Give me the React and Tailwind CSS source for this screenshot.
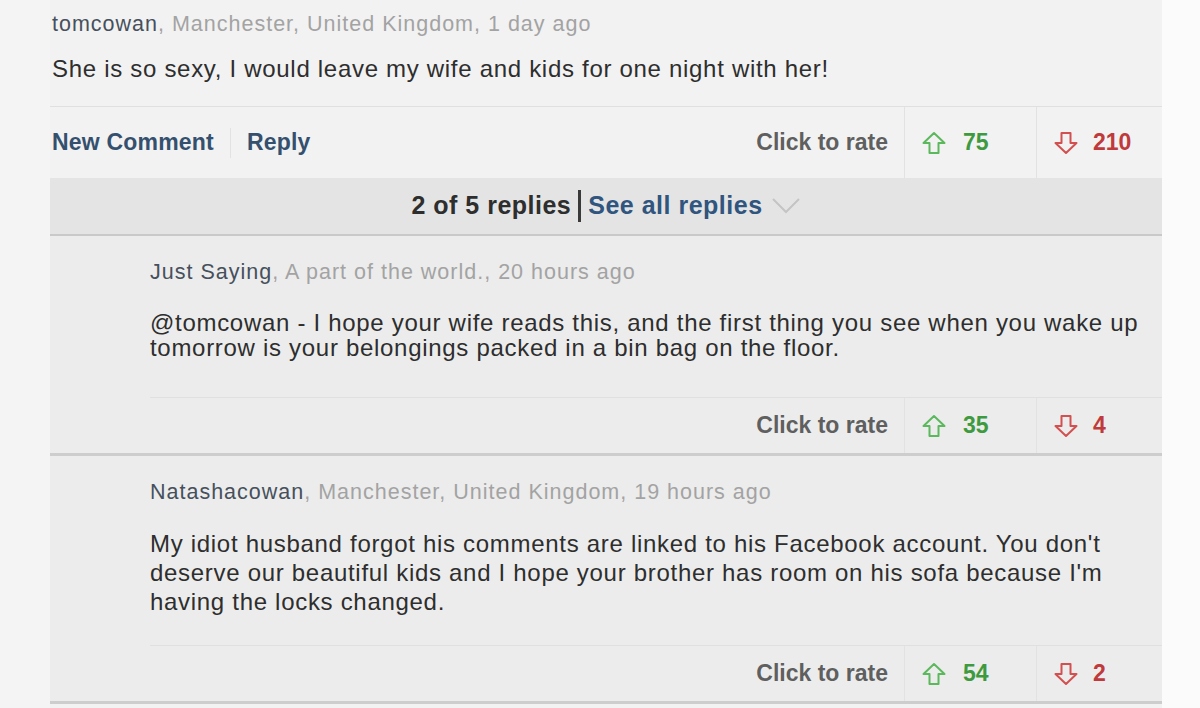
import React from 'react';

const font = { fontFamily: '"Liberation Sans", Arial, sans-serif' };

const UpArrow = () => (
  <svg width="26" height="24" viewBox="0 0 26 24" fill="none">
    <path d="M13 2 L23.5 12 L17.5 12 L17.5 22 L8.5 22 L8.5 12 L2.5 12 Z" stroke="#5cb85c" strokeWidth="2" strokeLinejoin="round" />
  </svg>
);

const DownArrow = () => (
  <svg width="26" height="24" viewBox="0 0 26 24" fill="none">
    <path d="M13 22 L23.5 12 L17.5 12 L17.5 2 L8.5 2 L8.5 12 L2.5 12 Z" stroke="#d2504f" strokeWidth="2" strokeLinejoin="round" />
  </svg>
);

const Rating = ({ up, down }) => (
  <div className="flex items-stretch justify-end h-full">
    <div className="flex items-center pr-[16px] text-[23px] font-bold text-[#5f5f5f]">Click to rate</div>
    <div className="flex items-center w-[132px] border-l border-[#e2e2e2] pl-[16px] gap-[16px]">
      <UpArrow />
      <span className="text-[23px] font-bold text-[#3e9a3e]">{up}</span>
    </div>
    <div className="flex items-center w-[126px] border-l border-[#e2e2e2] pl-[16px] gap-[14px]">
      <DownArrow />
      <span className="text-[23px] font-bold text-[#c0393b]">{down}</span>
    </div>
  </div>
);

const Meta = ({ name, rest }) => (
  <div className="text-[21.5px] tracking-[1px] leading-[26px]">
    <span className="text-[#46505c]">{name}</span>
    <span className="text-[#a3a3a3]">, {rest}</span>
  </div>
);

const replies = [
  {
    name: 'Just Saying',
    rest: 'A part of the world., 20 hours ago',
    lines: [
      '@tomcowan - I hope your wife reads this, and the first thing you see when you wake up',
      'tomorrow is your belongings packed in a bin bag on the floor.',
    ],
    up: 35,
    down: 4,
    h: 'h-[220px]',
    text: 'mt-[25px] leading-[25px]',
  },
  {
    name: 'Natashacowan',
    rest: 'Manchester, United Kingdom, 19 hours ago',
    lines: [
      "My idiot husband forgot his comments are linked to his Facebook account. You don't",
      "deserve our beautiful kids and I hope your brother has room on his sofa because I'm",
      'having the locks changed.',
    ],
    up: 54,
    down: 2,
    h: 'h-[248px]',
    text: 'mt-[24px] leading-[29px]',
  },
];

export default function App() {
  return (
    <div className="w-[1200px] h-[708px] overflow-hidden bg-[#f6f6f6] flex" style={font}>
      <div className="w-[50px] bg-[#f4f4f4]" />
      <div className="w-[1112px] flex flex-col bg-[#f2f2f2]">
        {/* main comment */}
        <div className="h-[107px] border-b border-[#e0e0e0] pl-[2px] pt-[11px]">
          <Meta name="tomcowan" rest="Manchester, United Kingdom, 1 day ago" />
          <p className="mt-[18px] text-[24px] leading-[28px] text-[#2e2e2e] tracking-[0.7px]">
            She is so sexy, I would leave my wife and kids for one night with her!
          </p>
        </div>
        <div className="h-[71px] flex items-stretch">
          <div className="flex items-center pl-[2px] text-[23px] font-bold text-[#34506e] tracking-[0.2px]">
            <span>New Comment</span>
            <span className="w-px h-[30px] bg-[#e2e2e2] mx-[16px]" />
            <span>Reply</span>
          </div>
          <div className="flex-1">
            <Rating up={75} down={210} />
          </div>
        </div>
        {/* replies bar */}
        <div className="h-[58px] bg-[#e4e4e4] border-b-2 border-[#c9c9c9] flex items-center justify-center text-[25px] font-bold tracking-[0.5px]">
          <span className="text-[#2e2e2e]">2 of 5 replies</span>
          <span className="w-[3px] h-[32px] bg-[#3a3a3a] mx-[7px]" />
          <span className="text-[#30557e]">See all replies</span>
          <svg className="ml-[8px]" width="30" height="18" viewBox="0 0 30 18" fill="none">
            <path d="M2 2 L15 15 L28 2" stroke="#c4c4c4" strokeWidth="2" />
          </svg>
        </div>
        {replies.map((r) => (
          <div key={r.name} className={`${r.h} bg-[#ececec] border-b-[3px] border-[#cdcdcd] flex flex-col pl-[100px]`}>
            <div className="pt-[23px]">
              <Meta name={r.name} rest={r.rest} />
              <div className={`${r.text} text-[24px] text-[#2e2e2e] tracking-[0.7px]`}>
                {r.lines.map((l) => (
                  <div key={l}>{l}</div>
                ))}
              </div>
            </div>
            <div className="mt-auto h-[56px] border-t border-[#e0e0e0]">
              <Rating up={r.up} down={r.down} />
            </div>
          </div>
        ))}
      </div>
      <div className="flex-1 bg-[#fbfbfb]" />
    </div>
  );
}
